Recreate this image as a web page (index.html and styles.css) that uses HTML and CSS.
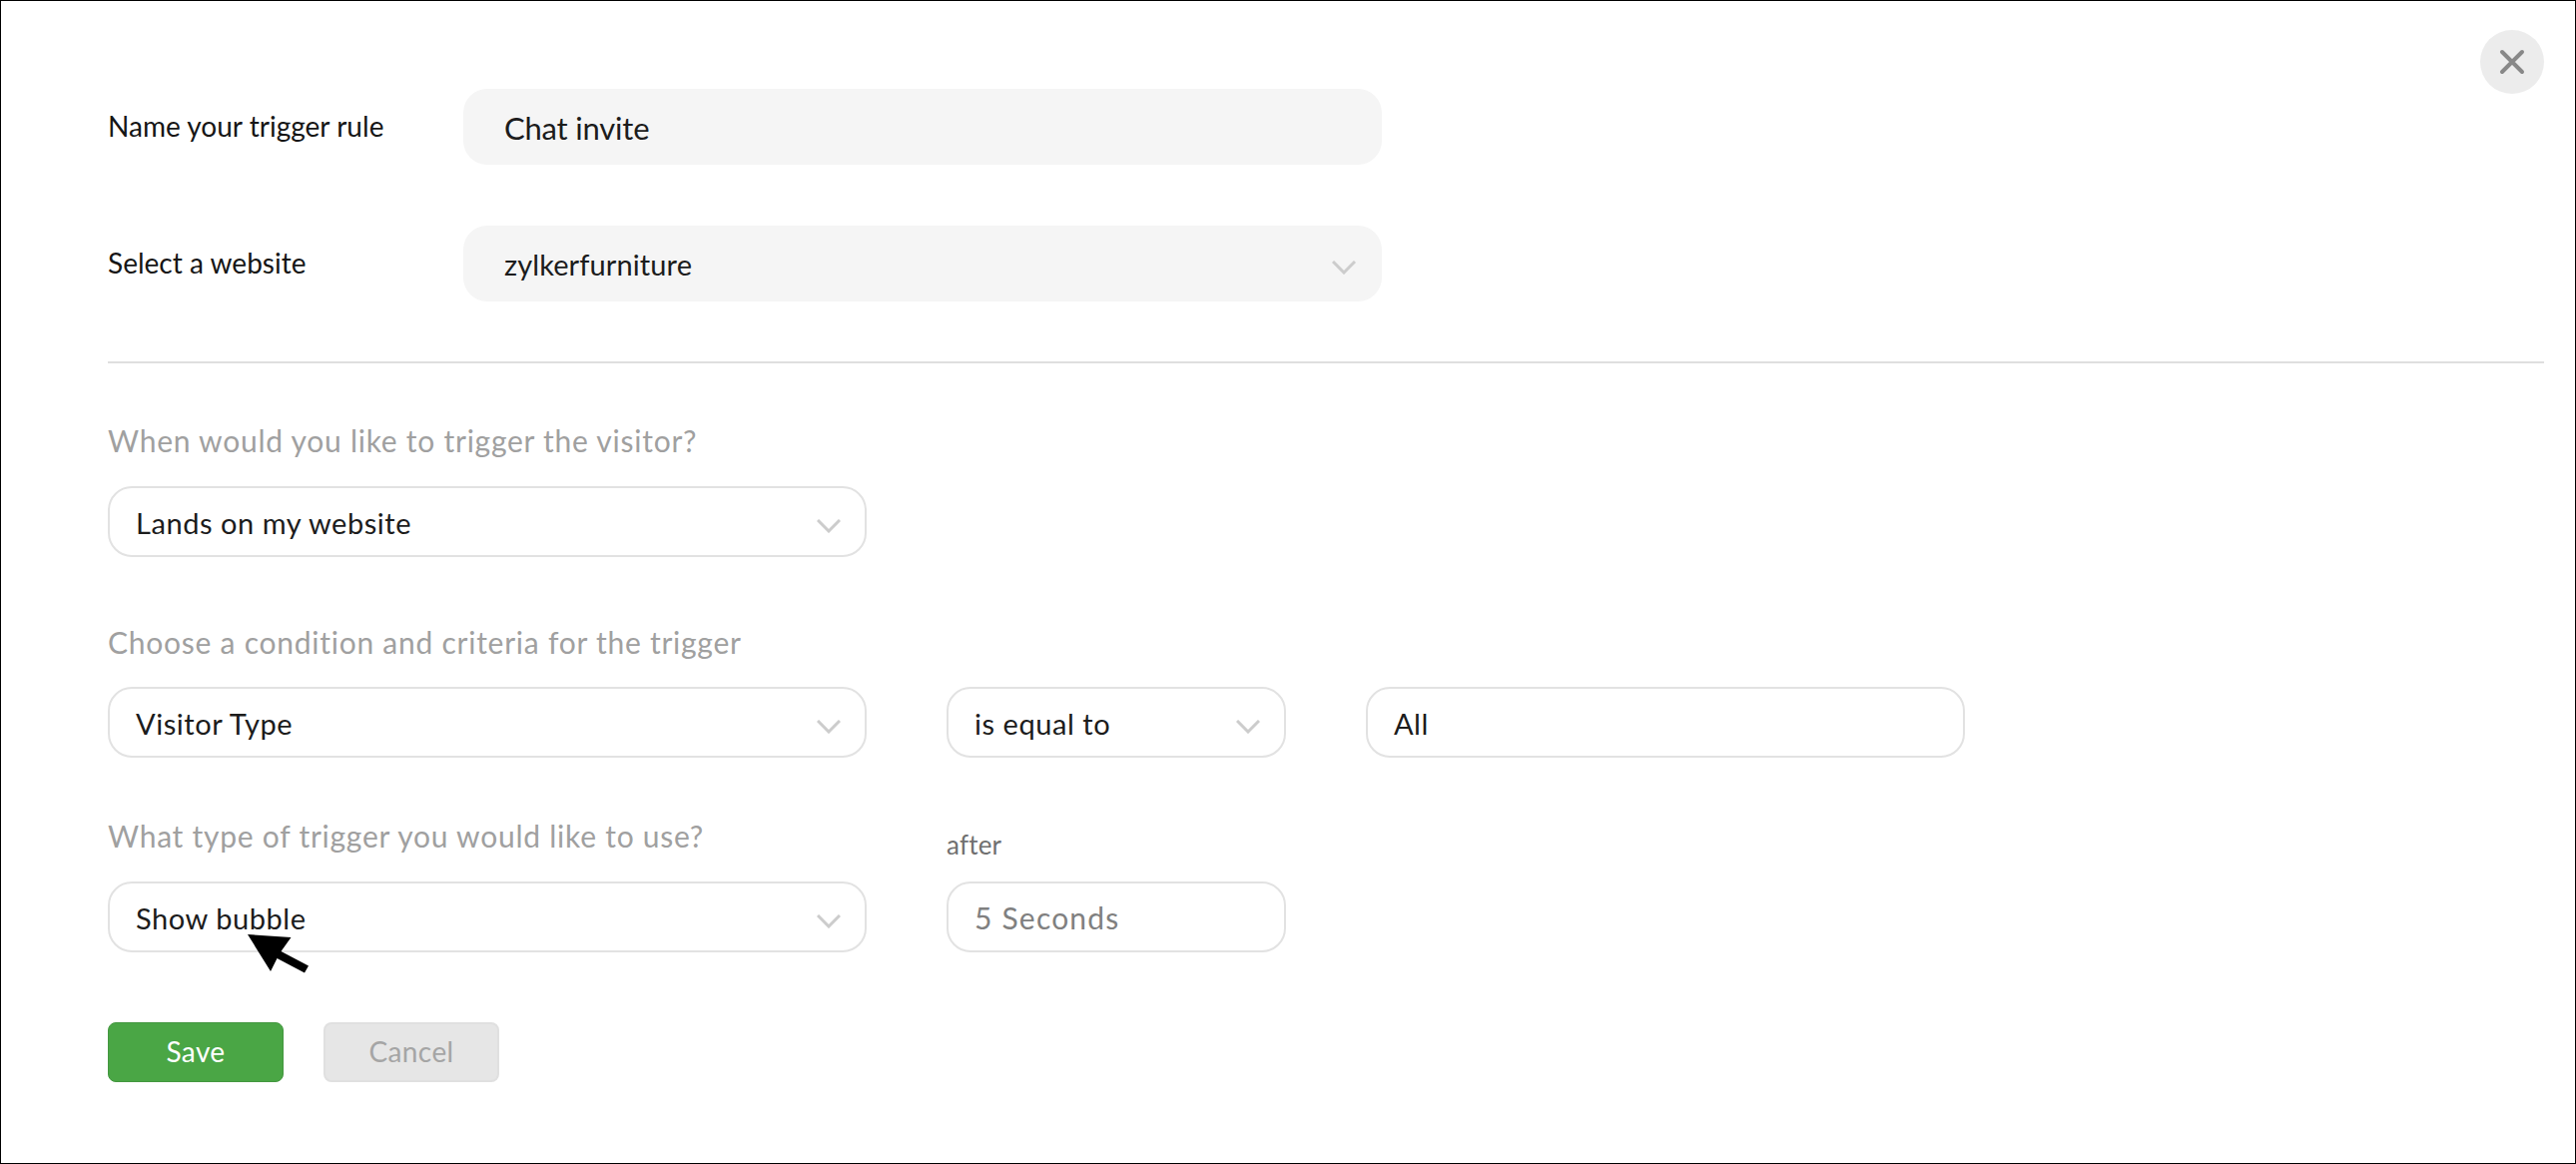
FILE: index.html
```html
<!DOCTYPE html>
<html lang="en">
<head>
<meta charset="utf-8">
<title>Trigger rule</title>
<link rel="stylesheet" href="styles.css">
</head>
<body>
<main class="page">
  <button class="close" aria-label="Close">
    <svg width="26" height="26" viewBox="0 0 26 26"><path d="M3 3 L23 23 M23 3 L3 23"/></svg>
  </button>

  <div class="top-row">
    <span class="top-label">Name your trigger rule</span>
    <div class="field soft large">Chat invite</div>
  </div>
  <div class="top-row second">
    <span class="top-label">Select a website</span>
    <div class="field soft">zylkerfurniture
      <svg class="chev" width="24" height="14" viewBox="0 0 24 14"><path d="M1 1 L12 12 L23 1"/></svg>
    </div>
  </div>

  <hr class="divider">

  <p class="question first">When would you like to trigger the visitor?</p>
  <div class="field outline wide">Lands on my website
    <svg class="chev" width="24" height="14" viewBox="0 0 24 14"><path d="M1 1 L12 12 L23 1"/></svg>
  </div>

  <p class="question second-q">Choose a condition and criteria for the trigger</p>
  <div class="triple">
    <div class="field outline">Visitor Type
      <svg class="chev" width="24" height="14" viewBox="0 0 24 14"><path d="M1 1 L12 12 L23 1"/></svg>
    </div>
    <div class="field outline">is equal to
      <svg class="chev" width="24" height="14" viewBox="0 0 24 14"><path d="M1 1 L12 12 L23 1"/></svg>
    </div>
    <div class="field outline">All</div>
  </div>

  <div class="triple third">
    <p class="question inline">What type of trigger you would like to use?</p>
    <p class="after">after</p>
    <span></span>
    <div class="field outline">Show bubble
      <svg class="chev" width="24" height="14" viewBox="0 0 24 14"><path d="M1 1 L12 12 L23 1"/></svg>
    </div>
    <div class="field outline placeholder">5 Seconds</div>
  </div>

  <div class="actions">
    <button class="btn save">Save</button>
    <button class="btn cancel">Cancel</button>
  </div>

  <svg class="pointer" width="64" height="42" viewBox="0 0 64 42"><path d="M0 0 L43.5 3 L33.5 17 L61 31.5 L57 38.5 L29.5 24 L23 37 Z"/></svg>
</main>
</body>
</html>
```
FILE: styles.css
```css
* { box-sizing: border-box; }
html, body { margin: 0; padding: 0; background: #fff; }
.page {
  position: relative;
  width: 2580px;
  height: 1166px;
  border: 1px solid #000;
  padding: 88px 31px 0 107px;
  font-family: "Lato", "Liberation Sans", sans-serif;
  font-size: 28px;
  color: #1c1c1c;
  overflow: hidden;
}
.close {
  position: absolute;
  top: 29px;
  right: 31px;
  width: 64px;
  height: 64px;
  border: 0;
  padding: 0;
  border-radius: 50%;
  background: #ececec;
  display: flex;
  align-items: center;
  justify-content: center;
}
.close path { stroke: #888; stroke-width: 4; stroke-linecap: round; fill: none; }
.top-row { display: flex; align-items: center; }
.top-row.second { margin-top: 61px; }
.top-label { width: 356px; font-size: 28px; letter-spacing: 0.02px; color: #161616; position: relative; top: -1px; }
.field {
  position: relative;
  display: flex;
  align-items: center;
  height: 71px;
  border-radius: 24px;
  padding: 1px 26px 0;
  font-size: 29px;
  letter-spacing: 0.55px;
}
.soft {
  width: 920px;
  height: 76px;
  background: #f5f5f5;
  padding-left: 41px;
  letter-spacing: 0.1px;
}
.large { font-size: 31px; letter-spacing: -0.2px; }
.outline { border: 2px solid #e2e2e2; background: #fff; }
.wide { width: 760px; }
.placeholder { color: #808080; font-size: 30px; letter-spacing: 1.2px; }
.chev {
  position: absolute;
  right: 24px;
  top: 50%;
  margin-top: -3px;
}
.soft .chev { right: 26px; }
.chev path { stroke: #ccc; stroke-width: 3; fill: none; }
.divider {
  margin: 60px 0 0;
  border: 0;
  height: 2px;
  background: #dfdfdf;
}
.question {
  margin: 0;
  font-size: 30px;
  letter-spacing: 0.75px;
  line-height: 34px;
  color: #a0a0a0;
}
.question.first { margin-top: 60px; margin-bottom: 29px; }
.question.second-q { margin-top: 68px; margin-bottom: 28px; }
.triple {
  display: grid;
  grid-template-columns: 760px 340px 600px;
  column-gap: 80px;
}
.triple.third { margin-top: 61px; row-gap: 29px; align-items: end; }
.after {
  margin: 0 0 -9px;
  font-size: 26px;
  letter-spacing: 0.2px;
  line-height: 34px;
  color: #707070;
}
.actions { display: flex; gap: 40px; margin-top: 70px; }
.btn {
  width: 176px;
  height: 60px;
  border-radius: 8px;
  font: inherit;
  font-size: 28px;
  padding: 0 0 2px;
  letter-spacing: 0.4px;
}
.save { background: #4aa645; border: 1px solid #43973f; color: #fff; }
.cancel { background: #e6e6e6; border: 2px solid #e0e0e0; color: #a5a5a5; }
.pointer { position: absolute; left: 247px; top: 935px; }
.pointer path { fill: #000; }
```
